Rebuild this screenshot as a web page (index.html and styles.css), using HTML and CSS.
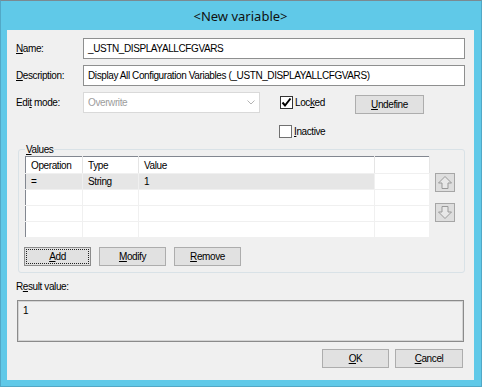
FILE: index.html
```html
<!DOCTYPE html>
<html lang="en">

<head>
    <meta charset="UTF-8">
    <title>New variable</title>
    <link rel="stylesheet" href="styles.css">
</head>

<body>
    <div class="window">
        <div class="titlebar">&lt;New variable&gt;</div>
        <div class="client">
            <div class="row">
                <span class="lbl"><u>N</u>ame:</span>
                <div class="edit">_USTN_DISPLAYALLCFGVARS</div>
            </div>
            <div class="row gap">
                <span class="lbl"><u>D</u>escription:</span>
                <div class="edit">Display All Configuration Variables (_USTN_DISPLAYALLCFGVARS)</div>
            </div>
            <div class="row gap">
                <span class="lbl">Edi<u>t</u> mode:</span>
                <div class="combo">
                    <span>Overwrite</span>
                    <svg width="8" height="5" viewBox="0 0 8 5"><path d="M0.5 0.5 L4 4 L7.5 0.5" fill="none" stroke="#b4b4b4" stroke-width="1"/></svg>
                </div>
                <div class="check locked">
                    <span class="box">
                        <svg width="11" height="11" viewBox="0 0 11 11"><path d="M1.5 5.5 L4 8.5 L9.5 1.5" fill="none" stroke="#000" stroke-width="2"/></svg>
                    </span>
                    <span>Loc<u>k</u>ed</span>
                </div>
                <button class="btn undefine"><u>U</u>ndefine</button>
            </div>
            <div class="row inactive">
                <div class="check">
                    <span class="box"></span>
                    <span><u>I</u>nactive</span>
                </div>
            </div>

            <fieldset class="group">
                <legend><u>V</u>alues</legend>
                <div class="list-row">
                    <table class="list">
                        <thead>
                            <tr><th class="c1">Operation</th><th class="c2">Type</th><th class="c3">Value</th><th class="c4"></th></tr>
                        </thead>
                        <tbody>
                            <tr class="sel"><td>=</td><td>String</td><td>1</td><td></td></tr>
                            <tr><td></td><td></td><td></td><td></td></tr>
                            <tr><td></td><td></td><td></td><td></td></tr>
                            <tr><td></td><td></td><td></td><td></td></tr>
                        </tbody>
                    </table>
                    <div class="arrows">
                        <button class="arrow">
                            <svg width="16" height="15" viewBox="0 0 16 15"><path d="M8 1.5 L14.5 8 L11 8 L11 13.5 L5 13.5 L5 8 L1.5 8 Z" fill="#e8e8e8" stroke="#999" stroke-width="1" stroke-linejoin="round"/></svg>
                        </button>
                        <button class="arrow">
                            <svg width="16" height="15" viewBox="0 0 16 15"><path d="M8 13.5 L14.5 7 L11 7 L11 1.5 L5 1.5 L5 7 L1.5 7 Z" fill="#e8e8e8" stroke="#999" stroke-width="1" stroke-linejoin="round"/></svg>
                        </button>
                    </div>
                </div>
                <div class="btn-row">
                    <button class="btn focus"><u>A</u>dd</button>
                    <button class="btn"><u>M</u>odify</button>
                    <button class="btn"><u>R</u>emove</button>
                </div>
            </fieldset>

            <div class="result-lbl">R<u>e</u>sult value:</div>
            <div class="result">1</div>

            <div class="footer">
                <button class="btn"><u>O</u>K</button>
                <button class="btn"><u>C</u>ancel</button>
            </div>
        </div>
    </div>
</body>

</html>
```

FILE: styles.css
```css
body {
    margin: 0;
    font-family: "Liberation Sans", Arial, sans-serif;
    font-size: 10px;
    letter-spacing: -0.4px;
    color: #000;
}

.window {
    width: 482px;
    height: 387px;
    box-sizing: border-box;
    background-color: #60c9e8;
    border: 1px solid #52a8c6;
    border-top-color: #7a8a92;
    padding: 29px 7px 6px 6px;
}

.titlebar {
    height: 29px;
    margin-top: -29px;
    padding-top: 1px;
    box-sizing: border-box;
    line-height: 29px;
    text-align: center;
    font-family: "Noto Sans", sans-serif;
    font-size: 13px;
    letter-spacing: 0;
    color: #111;
}

.client {
    height: 350px;
    box-sizing: border-box;
    background-color: #f0f0f0;
    padding: 8px 9px 0 9px;
}

.row {
    display: flex;
    align-items: center;
    height: 21px;
}

.gap {
    margin-top: 6px;
}

.lbl {
    width: 67px;
    flex: none;
}

.edit {
    width: 382px;
    height: 21px;
    box-sizing: border-box;
    border: 1px solid #8e8f8f;
    background-color: #fff;
    padding: 0 4px;
    line-height: 19px;
    white-space: nowrap;
}

.combo {
    width: 177px;
    height: 21px;
    box-sizing: border-box;
    border: 1px solid #d9d9d9;
    background-color: #fff;
    color: #9d9d9d;
    padding: 0 4px 0 4px;
    display: flex;
    align-items: center;
    justify-content: space-between;
}

.check {
    display: flex;
    align-items: center;
    gap: 2px;
}

.locked {
    width: 75px;
    margin-left: 20px;
}

.box {
    width: 13px;
    height: 13px;
    box-sizing: border-box;
    border: 1px solid #707070;
    background-color: #fff;
    display: flex;
    align-items: center;
    justify-content: center;
}

.locked .box {
    border-color: #333;
}

.inactive {
    height: 13px;
    margin-top: 12px;
    padding-left: 263px;
}

.btn {
    width: 67px;
    height: 19px;
    padding: 0;
    box-sizing: border-box;
    border: 1px solid #adadad;
    background-color: #e1e1e1;
    font-family: inherit;
    font-size: inherit;
    letter-spacing: inherit;
    color: #000;
}

.undefine {
    width: 69px;
    align-self: flex-end;
    margin-bottom: -1px;
}

.focus {
    border-color: #8c8c8c;
    outline: 1px dotted #222;
    outline-offset: -3px;
}

.group {
    margin: 5px 0 0 2px;
    width: 447px;
    box-sizing: border-box;
    border: 1px solid #d9e2e7;
    border-radius: 3px;
    padding: 0 6px 6px 6px;
}

.group legend {
    padding: 0 1px;
    line-height: 13px;
}

.list-row {
    display: flex;
    gap: 5px;
}

.list {
    width: 403px;
    flex: none;
    border: 1px solid #828790;
    border-collapse: collapse;
    background-color: #fff;
    table-layout: fixed;
}

.list th,
.list td {
    height: 15px;
    padding: 0 0 0 5px;
    text-align: left;
    font-weight: normal;
    border-right: 1px solid #f0f0f0;
    border-bottom: 1px solid #f0f0f0;
    white-space: nowrap;
    overflow: hidden;
}

.list th {
    height: 16px;
    border-right-color: #e5e5e5;
}

.c1 { width: 51px; }
.c2 { width: 50px; }
.c3 { width: 230px; }
.c4 { width: 49px; }

.list tr.sel td {
    background-color: #e6e6e6;
}

.list tr.sel td:last-child {
    background-color: #fff;
}

.arrows {
    display: flex;
    flex-direction: column;
    gap: 11px;
    padding-top: 17px;
}

.arrow {
    width: 20px;
    height: 19px;
    padding: 0;
    border: 1px solid #a6a6a6;
    background-color: #dedede;
    display: flex;
    align-items: center;
    justify-content: center;
}

.btn-row {
    display: flex;
    gap: 8px;
    margin: 9px 0 0 -1px;
}

.result-lbl {
    margin-top: 7px;
    line-height: 13px;
}

.result {
    width: 447px;
    height: 42px;
    margin: 7px 0 0 1px;
    box-sizing: border-box;
    border: 1px solid #8b8b8b;
    box-shadow: inset 0 0 0 1px #d4d4d4;
    padding: 4px 5px;
}

.footer {
    display: flex;
    justify-content: flex-end;
    gap: 6px;
    margin: 7px 2px 0 0;
}

.footer .btn:last-child {
    width: 68px;
}
```
